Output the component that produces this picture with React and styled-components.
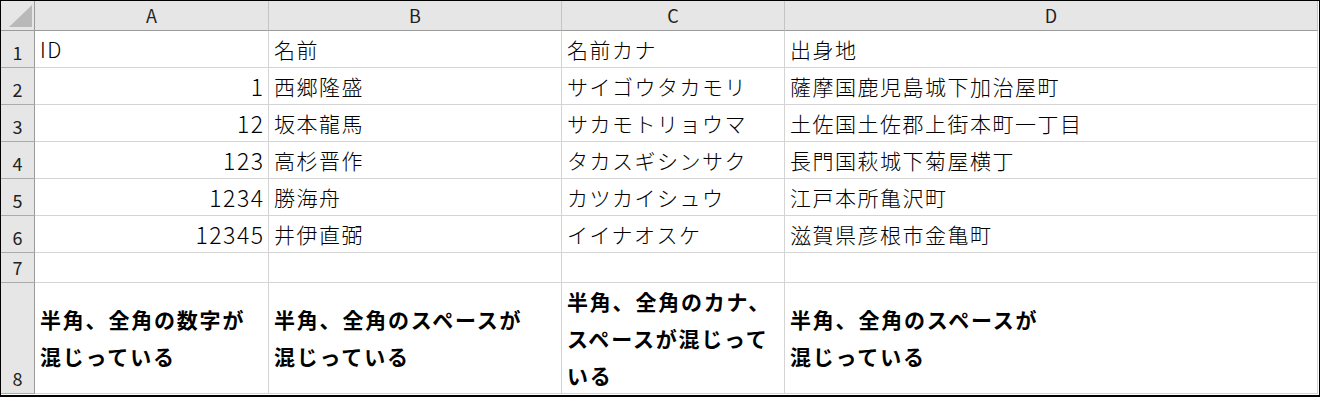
import React from "react";
import styled, { createGlobalStyle } from "styled-components";

const Global = createGlobalStyle`
  html, body { margin: 0; padding: 0; background: #fff; }
  * { box-sizing: border-box; }
`;

const FONT = `"Noto Sans CJK JP", "Noto Sans", sans-serif`;

const Frame = styled.div`
  width: 1320px;
  height: 397px;
  border-top: 1px solid #000;
  border-left: 1px solid #000;
  border-right: 1px solid #000;
  border-bottom: 2px solid #000;
  padding: 0 1px 1px 0;
  background: #fff;
  overflow: hidden;
`;

const Sheet = styled.div`
  display: grid;
  grid-template-columns: 34px 234px 293px 223px 533px;
  grid-template-rows: 30px repeat(6, 37px) 30px 111px;
  font-family: ${FONT};
  color: #000;
`;

const Corner = styled.div`
  background: #e6e6e6;
  border-right: 1px solid #9b9b9b;
  border-bottom: 1px solid #9b9b9b;
  display: flex;
  align-items: flex-end;
  justify-content: flex-end;
  padding: 0 2px 3px 0;
`;

const ColHeader = styled.div`
  background: #e6e6e6;
  border-right: 1px solid #c4c4c4;
  border-bottom: 1px solid #9b9b9b;
  display: flex;
  align-items: center;
  justify-content: center;
  font-size: 18px;
  line-height: 29px;
  color: #222;
`;

const RowHeader = styled.div`
  background: #e6e6e6;
  border-right: 1px solid #9b9b9b;
  border-bottom: 1px solid #ababab;
  display: flex;
  align-items: flex-end;
  justify-content: center;
  font-size: 18px;
  line-height: 24px;
  padding-bottom: 3px;
  color: #222;
`;

const Cell = styled.div`
  border-right: 1px solid #d4d4d4;
  border-bottom: 1px solid #d4d4d4;
  display: flex;
  align-items: ${(p) => (p.$note ? "center" : "flex-end")};
  justify-content: ${(p) => (p.$right ? "flex-end" : "flex-start")};
  padding: ${(p) =>
    p.$note ? "0 5px 0 5px" : p.$right ? "0 3.5px 3px 5px" : "0 5px 3px 5px"};
  font-size: ${(p) => (p.$right ? "23px" : "21px")};
  letter-spacing: ${(p) => (p.$note ? "1.8px" : p.$right ? "1.5px" : "1.5px")};
  line-height: ${(p) => (p.$note ? "37px" : "30px")};
  font-weight: ${(p) => (p.$note ? 700 : 300)};
  white-space: nowrap;
  overflow: hidden;
`;

const rows = [
  ["ID", "名前", "名前カナ", "出身地"],
  [1, "西郷隆盛", "サイゴウタカモリ", "薩摩国鹿児島城下加治屋町"],
  [12, "坂本龍馬", "サカモトリョウマ", "土佐国土佐郡上街本町一丁目"],
  [123, "高杉晋作", "タカスギシンサク", "長門国萩城下菊屋横丁"],
  [1234, "勝海舟", "カツカイシュウ", "江戸本所亀沢町"],
  [12345, "井伊直弼", "イイナオスケ", "滋賀県彦根市金亀町"],
  ["", "", "", ""],
];

const notes = [
  ["半角、全角の数字が", "混じっている"],
  ["半角、全角のスペースが", "混じっている"],
  ["半角、全角のカナ、", "スペースが混じって", "いる"],
  ["半角、全角のスペースが", "混じっている"],
];

const Lines = ({ lines }) => (
  <div>
    {lines.map((l, i) => (
      <div key={i}>{l}</div>
    ))}
  </div>
);

export default function App() {
  return (
    <>
      <Global />
      <Frame>
        <Sheet>
          <Corner>
            <svg width="23" height="22" viewBox="0 0 23 22">
              <polygon points="0,22 23,22 23,0" fill="#b9b9b9" />
            </svg>
          </Corner>
          {["A", "B", "C", "D"].map((c) => (
            <ColHeader key={c}>{c}</ColHeader>
          ))}
          {rows.map((r, i) => (
            <React.Fragment key={i}>
              <RowHeader>{i + 1}</RowHeader>
              {r.map((v, j) => (
                <Cell key={j} $right={typeof v === "number"}>
                  {v}
                </Cell>
              ))}
            </React.Fragment>
          ))}
          <RowHeader>8</RowHeader>
          {notes.map((n, j) => (
            <Cell key={j} $note>
              <Lines lines={n} />
            </Cell>
          ))}
        </Sheet>
      </Frame>
    </>
  );
}
